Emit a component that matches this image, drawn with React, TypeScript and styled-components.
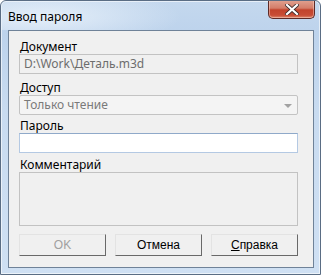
import React from 'react';
import styled, { createGlobalStyle } from 'styled-components';

const GlobalStyle = createGlobalStyle`
  html, body {
    margin: 0;
    padding: 0;
    background: #ffffff;
  }
  body {
    font-family: "Noto Sans", "Open Sans", sans-serif;
    font-size: 12px;
  }
`;

const Window = styled.div`
  box-sizing: border-box;
  width: 321px;
  height: 275px;
  border: 1px solid #5a6d84;
  border-radius: 6px 6px 0 0;
  background: linear-gradient(180deg, #c4d8ee 0%, #bdd3ec 12%, #c8dbf0 40%, #cfe0f3 100%);
  display: flex;
  flex-direction: column;
  overflow: hidden;
  box-shadow: inset 0 0 0 1px rgba(255, 255, 255, 0.6);
`;

const TitleBar = styled.div`
  height: 29px;
  display: flex;
  align-items: flex-start;
  justify-content: space-between;
  padding: 0 5px 0 7px;
  background: radial-gradient(ellipse 140px 30px at 40px 16px, rgba(235, 243, 251, 0.85), rgba(235, 243, 251, 0) 100%);
`;

const Title = styled.span`
  margin-top: 8px;
  color: #000000;
  font-size: 12px;
  line-height: 15px;
`;

const CloseButton = styled.div`
  box-sizing: border-box;
  width: 47px;
  height: 19px;
  margin-top: -1px;
  border: 1px solid #5d2a27;
  border-top: none;
  border-radius: 0 0 5px 5px;
  background: linear-gradient(180deg, #e1a392 0%, #d47d69 45%, #c2432c 55%, #c84d36 85%, #dd8b6f 100%);
  box-shadow: inset 0 0 0 1px rgba(255, 220, 210, 0.45);
  display: flex;
  align-items: center;
  justify-content: center;
`;

const Frame = styled.div`
  flex: 1;
  padding: 0 6px 6px 7px;
  display: flex;
`;

const Client = styled.div`
  box-sizing: border-box;
  flex: 1;
  border: 1px solid #6f8298;
  background: #f0f0f0;
  padding: 0 15px 0 10px;
  display: flex;
  flex-direction: column;
`;

const Label = styled.div<{ $top: number }>`
  margin-top: ${({ $top }) => $top}px;
  padding-left: 1px;
  height: 15px;
  line-height: 15px;
  color: #000000;
  font-size: 12px;
`;

const DisabledInput = styled.div`
  box-sizing: border-box;
  height: 20px;
  border: 1px solid #c2c2c2;
  background: #f0f0f0;
  color: #6d6d6d;
  padding: 0 4px;
  line-height: 18px;
  font-size: 12px;
  white-space: nowrap;
`;

const Combo = styled.div`
  box-sizing: border-box;
  height: 20px;
  border: 1px solid #c3c3c3;
  border-radius: 2px;
  background: #f4f4f4;
  color: #7a7a7a;
  padding: 0 5px 0 4px;
  line-height: 18px;
  font-size: 12px;
  display: flex;
  align-items: center;
  justify-content: space-between;
`;

const Arrow = styled.span`
  width: 0;
  height: 0;
  border-left: 4px solid transparent;
  border-right: 4px solid transparent;
  border-top: 4px solid #a2a2a2;
  margin-top: 1px;
`;

const TextInput = styled.div`
  box-sizing: border-box;
  height: 20px;
  border: 1px solid #b4c9e3;
  border-top-color: #8fa9c9;
  background: #ffffff;
`;

const CommentBox = styled.div`
  box-sizing: border-box;
  height: 54px;
  border: 1px solid #c2c2c2;
  background: #f0f0f0;
`;

const ButtonRow = styled.div`
  margin-top: 8px;
  display: flex;
  justify-content: space-between;
`;

const Button = styled.div<{ $disabled?: boolean }>`
  box-sizing: border-box;
  width: 87px;
  height: 22px;
  border: 1px solid;
  border-color: #e3e3e3 #696969 #696969 #e3e3e3;
  background: #f0f0f0;
  color: ${({ $disabled }) => ($disabled ? '#a0a0a0' : '#000000')};
  font-family: "Liberation Sans", Arial, sans-serif;
  font-size: 12px;
  line-height: 20px;
  text-align: center;

  u {
    text-decoration: underline;
  }
`;

const App = () => (
  <>
    <GlobalStyle />
    <Window>
      <TitleBar>
        <Title>Ввод пароля</Title>
        <CloseButton>
          <svg width="14" height="11" viewBox="0 0 14 11">
            <path
              d="M2 1 L12 10 M12 1 L2 10"
              stroke="#3b2b2b"
              strokeWidth="3.8"
              strokeLinecap="square"
            />
            <path
              d="M2 1 L12 10 M12 1 L2 10"
              stroke="#ffffff"
              strokeWidth="2.2"
              strokeLinecap="square"
            />
          </svg>
        </CloseButton>
      </TitleBar>
      <Frame>
        <Client>
          <Label $top={8}>Документ</Label>
          <DisabledInput>D:\Work\Деталь.m3d</DisabledInput>
          <Label $top={6}>Доступ</Label>
          <Combo>
            Только чтение
            <Arrow />
          </Combo>
          <Label $top={3}>Пароль</Label>
          <TextInput />
          <Label $top={4}>Комментарий</Label>
          <CommentBox />
          <ButtonRow>
            <Button $disabled>OK</Button>
            <Button>Отмена</Button>
            <Button>
              <u>С</u>правка
            </Button>
          </ButtonRow>
        </Client>
      </Frame>
    </Window>
  </>
);

export default App;
